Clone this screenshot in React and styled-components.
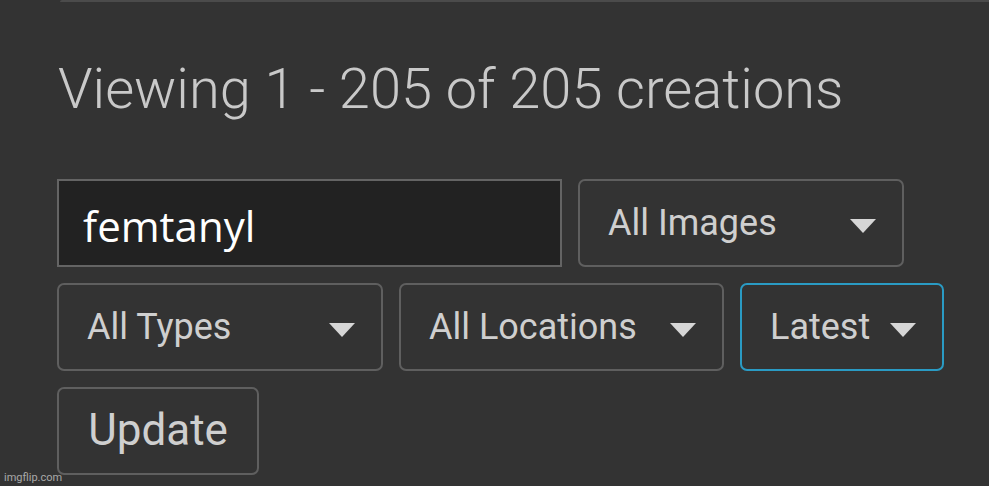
import React from "react";
import styled, { createGlobalStyle } from "styled-components";

const GlobalStyle = createGlobalStyle`
  html, body {
    margin: 0;
    padding: 0;
    background: #333333;
  }
  body {
    width: 989px;
    height: 486px;
    overflow: hidden;
    font-family: Roboto, "Noto Sans", sans-serif;
  }
`;

const Page = styled.div`
  position: relative;
  height: 486px;
  box-sizing: border-box;
  padding-left: 57px;
`;

const TopRule = styled.div`
  height: 2px;
  margin-left: 3px;
  background: #4b4b4b;
  border-top-left-radius: 2px;
`;

const Title = styled.h1`
  margin: 59px 0 0 1px;
  font-size: 56px;
  font-weight: 300;
  line-height: 1;
  color: #c9c9c9;
  letter-spacing: 0;
`;

const Form = styled.div`
  display: flex;
  flex-wrap: wrap;
  gap: 16px;
  width: 900px;
  margin-top: 62px;
`;

const SearchInput = styled.input`
  box-sizing: border-box;
  width: 505px;
  height: 88px;
  padding: 4px 24px 0;
  background: #222222;
  border: 2px solid #646464;
  outline: none;
  color: #ffffff;
  font-family: "Open Sans", "Noto Sans", sans-serif;
  font-size: 42px;
`;

const Select = styled.div`
  box-sizing: border-box;
  width: ${p => p.$w}px;
  height: 88px;
  display: flex;
  align-items: center;
  justify-content: space-between;
  padding: 0 26px 0 28px;
  border: 2px solid ${p => (p.$active ? "#2a9bc4" : "#5f5f5f")};
  border-radius: 7px;
  color: #cfcfcf;
  font-size: 36px;
  cursor: pointer;
`;

const Caret = styled.span`
  flex: none;
  width: 0;
  height: 0;
  border-left: 13px solid transparent;
  border-right: 13px solid transparent;
  border-top: 14px solid #d6d6d6;
  margin-top: 6px;
`;

const Button = styled.button`
  box-sizing: border-box;
  width: 202px;
  height: 88px;
  background: transparent;
  border: 2px solid #5f5f5f;
  border-radius: 7px;
  color: #cfcfcf;
  font-family: Roboto, sans-serif;
  font-size: 44px;
  padding: 0 0 2px;
`;

const Watermark = styled.span`
  position: absolute;
  left: 4px;
  bottom: 2px;
  font-family: Roboto, sans-serif;
  font-size: 11px;
  color: #a9a9a9;
`;

function Dropdown({ label, width, active }) {
  return (
    <Select $w={width} $active={active}>
      <span>{label}</span>
      <Caret />
    </Select>
  );
}

export default function App() {
  return (
    <>
      <GlobalStyle />
      <Page>
        <TopRule />
        <Title>Viewing 1 - 205 of 205 creations</Title>
        <Form>
          <SearchInput defaultValue="femtanyl" />
          <Dropdown label="All Images" width={326} />
          <Dropdown label="All Types" width={326} />
          <Dropdown label="All Locations" width={325} />
          <Dropdown label="Latest" width={204} active />
          <Button>Update</Button>
        </Form>
        <Watermark>imgflip.com</Watermark>
      </Page>
    </>
  );
}
